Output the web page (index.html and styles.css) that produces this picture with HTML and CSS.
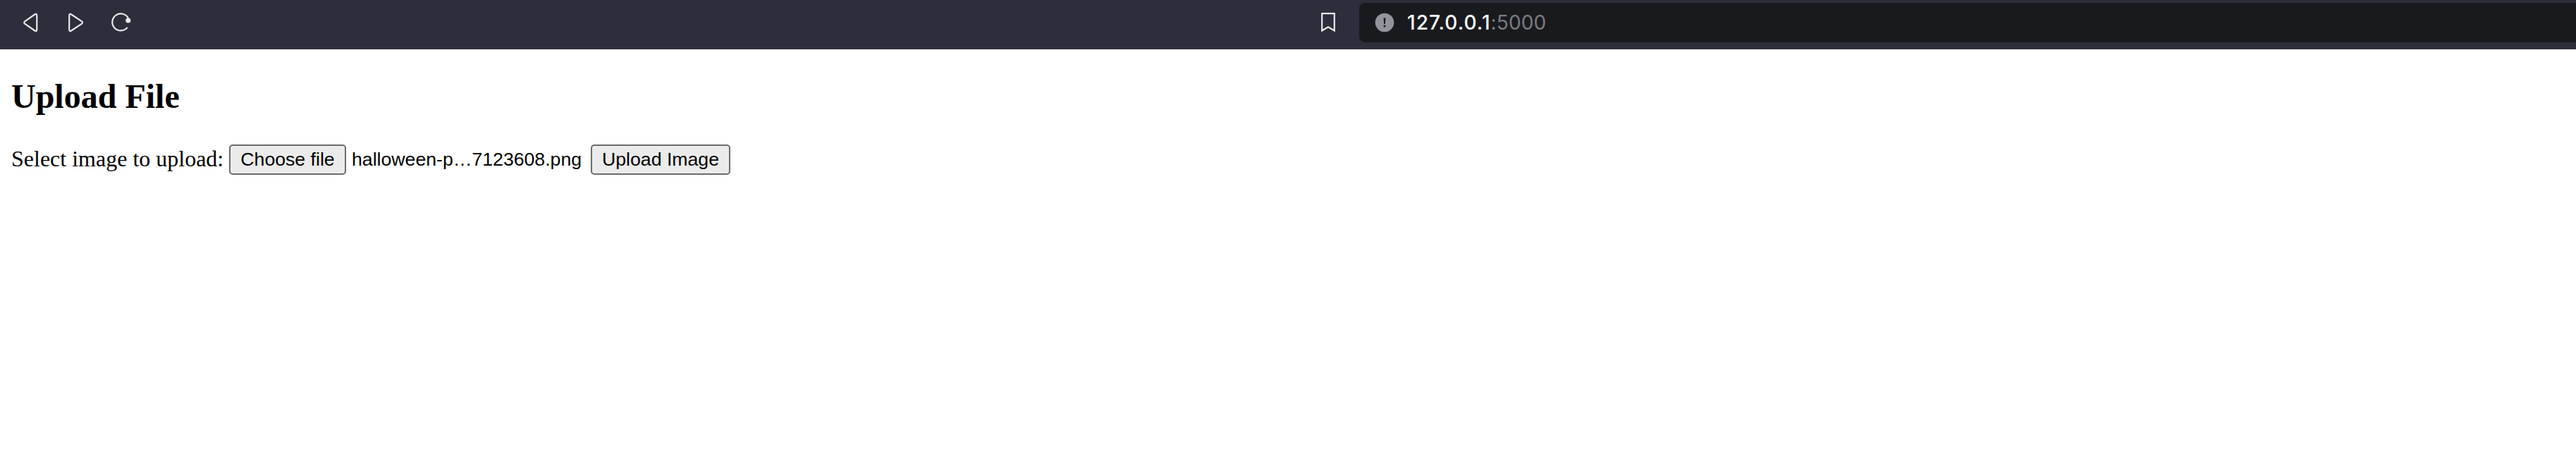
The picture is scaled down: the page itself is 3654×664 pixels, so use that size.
FILE: index.html
```html
<!DOCTYPE html>
<html lang="en">
<head>
<meta charset="utf-8">
<title>Upload File</title>
<link rel="stylesheet" href="styles.css">
</head>
<body>
<header class="toolbar">
  <nav class="nav">
    <svg class="icon" width="28" height="32" viewBox="0 0 28 32"><path d="M17.3 3.5 3.5 13.1Q.9 15 3.5 16.9L17.3 26.5Q20.3 28.3 20.3 24.8V5.2Q20.3 1.7 17.3 3.5Z"/></svg>
    <svg class="icon" width="28" height="32" viewBox="0 0 28 32"><path d="M5.2 3.5 19.7 13.1Q22.3 15 19.7 16.9L5.2 26.5Q2.2 28.3 2.2 24.8V5.2Q2.2 1.7 5.2 3.5Z"/></svg>
    <svg class="icon reload" width="32" height="32" viewBox="0 0 32 32"><path d="M25 9A12 12 0 1 0 23.7 21.9"/><circle class="dot" cx="24.8" cy="12" r="3.6"/></svg>
  </nav>
  <svg class="icon bookmark" width="20" height="28" viewBox="0 0 20 28"><path d="M1.2 1.2H18.8V25.5L10 20.2 1.2 25.5Z"/></svg>
  <div class="address">
    <svg class="info" width="28" height="28" viewBox="0 0 28 28"><circle cx="14" cy="14" r="13.3"/><path d="M12.6 7.5h2.8l-.5 8.5h-1.8Z"/><circle class="mark" cx="14" cy="19" r="1.6"/></svg>
    <span class="url"><span class="host">127.0.0.1</span><span class="port">:5000</span></span>
  </div>
</header>
<main class="page">
  <h2 class="title">Upload File</h2>
  <form class="form">
    <label class="label">Select image to upload:</label>
    <button class="button choose" type="button">Choose file</button>
    <span class="filename">halloween-p…7123608.png</span>
    <button class="button submit" type="button">Upload Image</button>
  </form>
</main>
</body>
</html>
```
FILE: styles.css
```css
* { box-sizing: border-box; }
body {
  margin: 0;
  background: #fff;
  color: #000;
}
.toolbar {
  display: flex;
  height: 70px;
  background: #2c2e3b;
}
.nav {
  display: flex;
  gap: 36px;
  width: 1874px;
  padding: 17px 0 0 32px;
}
.icon {
  display: block;
  flex: none;
  fill: none;
  stroke: #e9e9e9;
  stroke-width: 2.2;
}
.reload { margin-left: -3px; }
.dot { fill: #e9e9e9; stroke: none; }
.bookmark { margin: 18px 34px 0 0; }
.address {
  display: flex;
  flex: 1;
  align-items: center;
  height: 56px;
  margin-top: 4px;
  padding-left: 22px;
  border-radius: 8px 0 0 8px;
  background: #191a1e;
}
.info { fill: #91949c; }
.info path, .mark { fill: #191a1e; }
.url {
  margin-left: 18px;
  color: #fff;
  font: 500 28px/56px Inter, sans-serif;
}
.host { letter-spacing: 1.05px; }
.port { color: #7b7c80; font-weight: 400; letter-spacing: 0.1px; }
.page { padding: 39px 16px 0; }
.title {
  margin: 0;
  font: bold 48px/56px "Liberation Serif", serif;
}
.form {
  display: flex;
  align-items: center;
  height: 43px;
  margin-top: 40px;
}
.label {
  width: 309px;
  padding-bottom: 3px;
  white-space: nowrap;
  font: 32px/36px "Liberation Serif", serif;
}
.button {
  height: 43px;
  padding: 0 0 2px;
  border: 2px solid #6b6b6b;
  border-radius: 5px;
  background: #ebebeb;
  color: #000;
  font: 26.667px/36px "Liberation Sans", Arial, sans-serif;
  white-space: nowrap;
}
.choose { width: 166px; }
.filename {
  width: 339px;
  margin-left: 8px;
  padding-bottom: 2px;
  white-space: nowrap;
  font: 26.667px/36px "Liberation Sans", Arial, sans-serif;
}
.submit { width: 198px; }
```
